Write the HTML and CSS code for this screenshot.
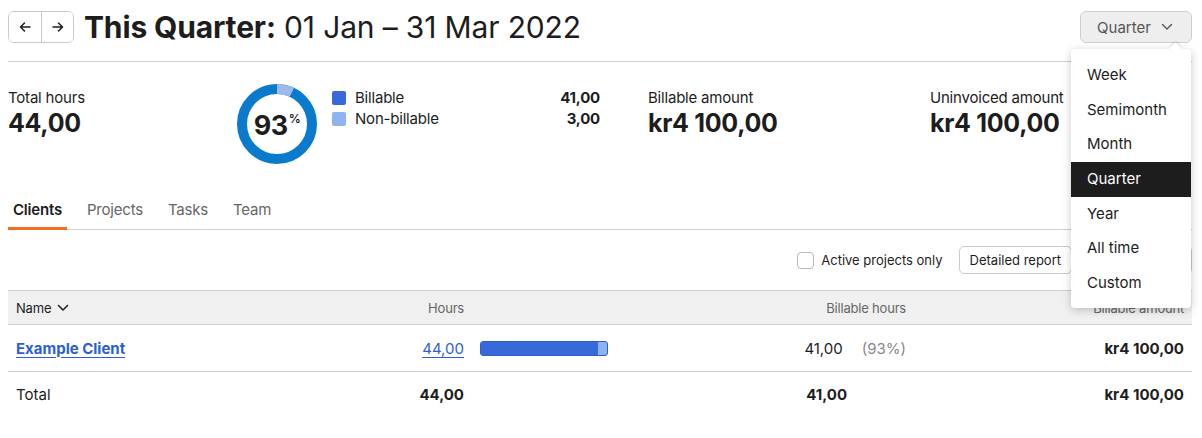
FILE: index.html
```html
<!DOCTYPE html>
<html lang="en">
<head>
<meta charset="utf-8">
<title>Reports</title>
<link rel="stylesheet" href="styles.css">
</head>
<body>
<div class="page">
  <header class="header">
    <div class="nav-group">
      <button class="nav-btn" aria-label="Previous">
        <svg width="14" height="14" viewBox="0 0 14 14"><path d="M12 7H2.5M6.5 3L2.5 7l4 4" fill="none" stroke="#1d1d1d" stroke-width="1.5" stroke-linecap="round" stroke-linejoin="round"/></svg>
      </button>
      <button class="nav-btn" aria-label="Next">
        <svg width="14" height="14" viewBox="0 0 14 14"><path d="M2 7h9.5M7.5 3l4 4-4 4" fill="none" stroke="#1d1d1d" stroke-width="1.5" stroke-linecap="round" stroke-linejoin="round"/></svg>
      </button>
    </div>
    <h1 class="title"><strong>This Quarter:</strong> 01 Jan – 31 Mar 2022</h1>
    <div class="period">
      <button class="period-btn">Quarter
        <svg width="12" height="8" viewBox="0 0 12 8"><path d="M1.5 1.5L6 6l4.5-4.5" fill="none" stroke="#555" stroke-width="1.4" stroke-linecap="round" stroke-linejoin="round"/></svg>
      </button>
      <ul class="menu">
        <li class="menu-item">Week</li>
        <li class="menu-item">Semimonth</li>
        <li class="menu-item">Month</li>
        <li class="menu-item is-active">Quarter</li>
        <li class="menu-item">Year</li>
        <li class="menu-item">All time</li>
        <li class="menu-item">Custom</li>
      </ul>
    </div>
  </header>

  <section class="stats">
    <div class="stat stat-total">
      <div class="stat-label">Total hours</div>
      <div class="stat-value">44,00</div>
    </div>
    <div class="donut">
      <svg width="82" height="82" viewBox="0 0 82 82">
        <circle cx="41" cy="41" r="35" fill="none" stroke="#0a7acc" stroke-width="10"/>
        <circle cx="41" cy="41" r="35" fill="none" stroke="#9dbbe8" stroke-width="10" stroke-dasharray="15.4 204.5" transform="rotate(-90 41 41)"/>
      </svg>
      <div class="donut-label">93<span class="pct">%</span></div>
    </div>
    <div class="legend">
      <div class="legend-row">
        <span class="swatch swatch-billable"></span>
        <span class="legend-name">Billable</span>
        <span class="legend-value">41,00</span>
      </div>
      <div class="legend-row">
        <span class="swatch swatch-non"></span>
        <span class="legend-name">Non-billable</span>
        <span class="legend-value">3,00</span>
      </div>
    </div>
    <div class="stat stat-billable">
      <div class="stat-label">Billable amount</div>
      <div class="stat-value">kr4 100,00</div>
    </div>
    <div class="stat stat-uninvoiced">
      <div class="stat-label">Uninvoiced amount</div>
      <div class="stat-value">kr4 100,00</div>
    </div>
  </section>

  <nav class="tabs">
    <a class="tab is-active">Clients</a>
    <a class="tab">Projects</a>
    <a class="tab">Tasks</a>
    <a class="tab">Team</a>
  </nav>

  <div class="toolbar">
    <label class="check">
      <span class="checkbox"></span>
      <span>Active projects only</span>
    </label>
    <button class="btn">Detailed report</button>
    <button class="btn btn-export">Export</button>
  </div>

  <div class="table">
    <div class="trow thead">
      <div class="cell c-name">Name
        <svg width="12" height="8" viewBox="0 0 12 8"><path d="M1.5 1.5L6 6l4.5-4.5" fill="none" stroke="#1d1d1d" stroke-width="1.5" stroke-linecap="round" stroke-linejoin="round"/></svg>
      </div>
      <div class="cell c-hours">Hours</div>
      <div class="cell c-bar"></div>
      <div class="cell c-billable">Billable hours</div>
      <div class="cell c-amount">Billable amount</div>
    </div>
    <div class="trow tbody">
      <div class="cell c-name"><a class="link link-bold">Example Client</a></div>
      <div class="cell c-hours"><a class="link">44,00</a></div>
      <div class="cell c-bar">
        <div class="bar"><div class="bar-fill" style="width: 93%"></div></div>
      </div>
      <div class="cell c-billable"><span>41,00</span><span class="muted">(93%)</span></div>
      <div class="cell c-amount strong">kr4 100,00</div>
    </div>
    <div class="trow tfoot">
      <div class="cell c-name">Total</div>
      <div class="cell c-hours strong">44,00</div>
      <div class="cell c-bar"></div>
      <div class="cell c-billable strong"><span>41,00</span><span class="muted-spacer"></span></div>
      <div class="cell c-amount strong">kr4 100,00</div>
    </div>
  </div>
</div>
</body>
</html>
```
FILE: styles.css
```css
* { box-sizing: border-box; }
html, body { margin: 0; padding: 0; background: #fff; }
body {
  font-family: Inter, "Liberation Sans", Arial, sans-serif;
  color: #1d1d1d;
  font-size: 15px;
}
.page { padding: 8px 10px 0 8px; width: 1202px; }

/* header */
.header {
  display: flex;
  align-items: center;
  padding: 3px 0 18px;
  border-bottom: 1px solid #cfcfcf;
  height: 54px;
}
.nav-group {
  display: flex;
  height: 32px;
  border: 1px solid #c9c9c9;
  border-radius: 6px;
  overflow: hidden;
}
.nav-btn {
  width: 32px;
  height: 30px;
  border: 0;
  background: #fff;
  display: flex;
  align-items: center;
  justify-content: center;
  padding: 0;
}
.nav-btn + .nav-btn { border-left: 1px solid #c9c9c9; width: 32px; }
.title {
  margin: 0 0 0 10px;
  font-size: 30px;
  font-weight: 400;
  letter-spacing: -0.15px;
  line-height: 34px;
}
.title strong { font-weight: 700; }
.period { margin-left: auto; position: relative; }
.period-btn {
  height: 32px;
  width: 112px;
  display: flex;
  align-items: center;
  justify-content: center;
  gap: 10px;
  background: #eee;
  border: 1px solid #cfcfcf;
  border-radius: 6px;
  font-family: inherit;
  font-size: 15px;
  color: #555;
  padding: 0 8px 0 6px;
}
.menu {
  position: absolute;
  top: 38px;
  right: 1px;
  width: 120px;
  margin: 0;
  padding: 9px 0 7.5px;
  list-style: none;
  background: #fff;
  border-radius: 4px;
  box-shadow: 0 2px 8px rgba(0,0,0,0.22);
  z-index: 10;
}
.menu::before {
  content: "";
  position: absolute;
  top: -5px;
  right: 11px;
  width: 9px;
  height: 9px;
  background: #fff;
  transform: rotate(45deg);
  box-shadow: -1px -1px 2px rgba(0,0,0,0.12);
}
.menu-item {
  position: relative;
  height: 34.67px;
  line-height: 34.67px;
  padding: 0 16px;
  font-size: 15px;
  color: #1d1d1d;
}
.menu-item.is-active { background: #1d1d1d; color: #fff; }

/* stats */
.stats {
  display: flex;
  align-items: flex-start;
  padding: 21px 0 0;
  height: 138px;
}
.stat { margin-top: 5px; }
.stat-label { font-size: 15px; line-height: 20px; letter-spacing: -0.2px; }
.stat-value { font-size: 25px; font-weight: 700; line-height: 30px; letter-spacing: -0.3px; }
.stat-total { width: 228px; }
.donut { position: relative; width: 82px; height: 82px; }
.donut svg { display: block; }
.donut-label {
  position: absolute;
  inset: 0;
  display: flex;
  align-items: center;
  justify-content: center;
  font-size: 27px;
  font-weight: 700;
  letter-spacing: -0.5px;
  padding-top: 2px;
}
.pct { font-size: 12px; font-weight: 600; align-self: flex-start; margin-top: 26px; margin-left: 1px; }
.legend { margin-left: 14px; width: 268px; margin-top: 4px; letter-spacing: -0.2px; }
.legend-row { display: flex; align-items: center; height: 21px; }
.swatch { width: 14px; height: 14px; border-radius: 2px; margin-right: 9px; }
.swatch-billable { background: #376ad8; }
.swatch-non { background: #8db4f0; }
.legend-value { margin-left: auto; font-weight: 700; }
.stat-billable { margin-left: 48px; width: 282px; }

/* tabs */
.tabs {
  display: flex;
  gap: 15px;
  border-bottom: 1px solid #cfcfcf;
}
.tab {
  padding: 0 5px 7px;
  line-height: 20px;
  font-size: 15px;
  color: #666;
  letter-spacing: -0.2px;
  border-bottom: 3px solid transparent;
  margin-bottom: -1px;
}
.tab.is-active { color: #1d1d1d; font-weight: 600; border-bottom-color: #f36c21; }

/* toolbar */
.toolbar {
  display: flex;
  justify-content: flex-end;
  align-items: center;
  gap: 16px;
  height: 60px;
}
.check { display: flex; align-items: center; gap: 7px; font-size: 13px; }
.checkbox {
  width: 17px;
  height: 17px;
  border: 1px solid #b8b8b8;
  border-radius: 4px;
  background: #fff;
}
.btn {
  height: 28px;
  padding: 0 10px;
  font-family: inherit;
  font-size: 13px;
  color: #1d1d1d;
  background: #fff;
  border: 1px solid #c9c9c9;
  border-radius: 5px;
}
.btn + .btn { margin-left: -8px; }
.btn-export { width: 112px; }

/* table */
.table { border-top: 1px solid #cfcfcf; }
.trow {
  display: grid;
  grid-template-columns: 400px 56px 332px 110px 1fr;
  align-items: center;
}
.thead {
  background: #f0f0f0;
  height: 34px;
  border-bottom: 1px solid #cfcfcf;
  font-size: 13px;
  letter-spacing: -0.2px;
  color: #666;
}
.tbody { height: 47px; border-bottom: 1px solid #cfcfcf; }
.tfoot { height: 45px; }
.cell { white-space: nowrap; }
.c-name { padding-left: 8px; display: flex; align-items: center; gap: 6px; }
.thead .c-name { color: #1d1d1d; }
.c-hours { text-align: right; }
.c-bar { padding-left: 16px; }
.c-billable { display: flex; justify-content: flex-end; gap: 19px; }
.c-amount { text-align: right; padding-right: 8px; }
.strong { font-weight: 700; }
.link { color: #2b5fd6; text-decoration: underline; text-underline-offset: 3px; }
.link-bold { font-weight: 700; }
.muted { color: #888; }
.muted-spacer { width: 40px; }
.bar {
  width: 128px;
  height: 15px;
  border-radius: 3px;
  background: #8db4f0;
  border: 1px solid #2f5fc4;
  overflow: hidden;
}
.bar-fill { height: 100%; background: #376ad8; }
```
